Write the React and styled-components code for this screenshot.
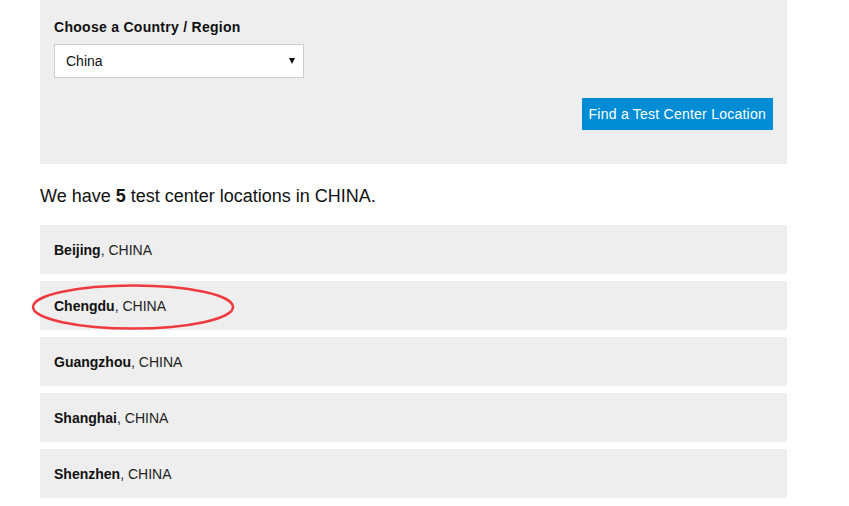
import styled, { createGlobalStyle } from "styled-components";

const Global = createGlobalStyle`
    body {
        margin: 0;
        background: #ffffff;
        font-family: "Liberation Sans", Arial, sans-serif;
        color: #111;
    }
`;

const Page = styled.div`
    width: 747px;
    margin-left: 40px;
`;

const SearchPanel = styled.div`
    background: #eeeeee;
    padding: 19px 14px 34px 14px;
    display: flex;
    flex-direction: column;
`;

const Label = styled.div`
    font-size: 14px;
    font-weight: bold;
    line-height: 17px;
    letter-spacing: 0.28px;
    color: #111;
`;

const SelectBox = styled.div`
    margin-top: 8px;
    width: 250px;
    height: 34px;
    box-sizing: border-box;
    background: #fff;
    border: 1px solid #cccccc;
    display: flex;
    align-items: center;
    justify-content: space-between;
    padding: 0 8px 0 11px;
    font-size: 14px;
    color: #111;
`;

const Arrow = styled.span`
    width: 0;
    height: 0;
    border-left: 3.5px solid transparent;
    border-right: 3.5px solid transparent;
    border-top: 6px solid #111;
    margin-top: -1px;
`;

const Actions = styled.div`
    margin-top: 20px;
    display: flex;
    justify-content: flex-end;
`;

const FindButton = styled.button`
    background: #008dd6;
    color: #fff;
    border: none;
    height: 32px;
    padding: 0 7px;
    font-family: "Liberation Sans", Arial, sans-serif;
    font-size: 14px;
    letter-spacing: 0.24px;
    cursor: pointer;
`;

const Summary = styled.p`
    margin: 22px 0 19px 0;
    font-size: 18px;
    line-height: 20px;
    color: #111;
`;

const List = styled.div`
    display: flex;
    flex-direction: column;
    gap: 7px;
`;

const Row = styled.div`
    position: relative;
    background: #eeeeee;
    height: 49px;
    display: flex;
    align-items: center;
    padding-left: 14px;
    font-size: 14px;
    color: #222;
`;

const City = styled.b`
    color: #111;
`;

const Circle = styled.svg`
    position: absolute;
    left: -10px;
    top: 2px;
    pointer-events: none;
`;

const cities = ["Beijing", "Chengdu", "Guangzhou", "Shanghai", "Shenzhen"];

const App = () => {
    return (
        <Page>
            <Global />
            <SearchPanel>
                <Label>Choose a Country / Region</Label>
                <SelectBox>
                    China
                    <Arrow />
                </SelectBox>
                <Actions>
                    <FindButton>Find a Test Center Location</FindButton>
                </Actions>
            </SearchPanel>
            <Summary>We have <b>5</b> test center locations in CHINA.</Summary>
            <List>
                {cities.map((city) => (
                    <Row key={city}>
                        <span><City>{city}</City>, CHINA</span>
                        {city === "Chengdu" ? (
                            <Circle width="206" height="48" viewBox="0 0 206 48">
                                <ellipse cx="103" cy="24" rx="100" ry="21.5" fill="none" stroke="#ee3a3f" strokeWidth="2.5" />
                            </Circle>
                        ) : null}
                    </Row>
                ))}
            </List>
        </Page>
    );
};

export default App;
